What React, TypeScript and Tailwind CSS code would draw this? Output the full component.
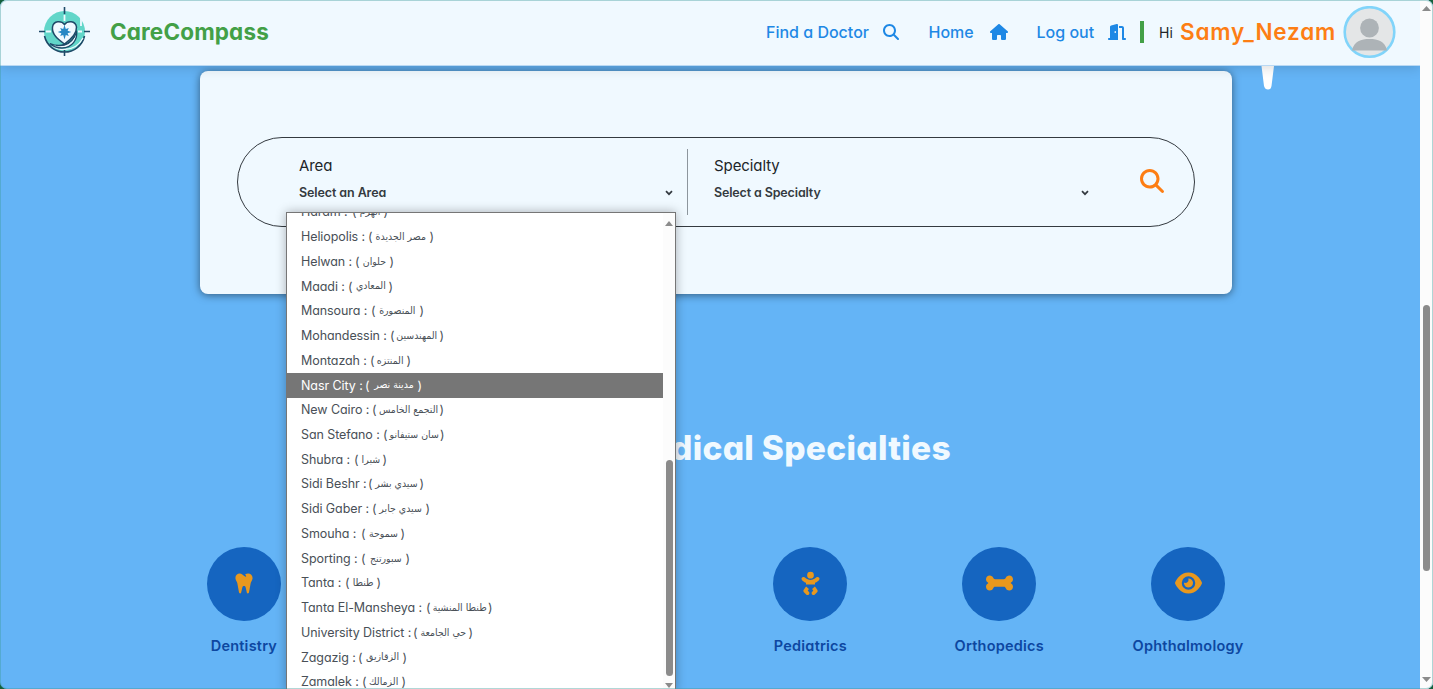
import React from "react";
import { FaTooth, FaBone, FaEye, FaBaby, FaMagnifyingGlass, FaHouse, FaDoorOpen } from "react-icons/fa6";

type Area = { name: string; arabic: string; nameWidth: number; end: number };

const areas: Area[] = [
  { name: "Haram", arabic: "الهرم", nameWidth: 51, end: 87 },
  { name: "Heliopolis", arabic: "مصر الجديدة", nameWidth: 67, end: 133 },
  { name: "Helwan", arabic: "حلوان", nameWidth: 54, end: 93 },
  { name: "Maadi", arabic: "المعادي", nameWidth: 47, end: 92 },
  { name: "Mansoura", arabic: "المنصورة", nameWidth: 70, end: 123 },
  { name: "Mohandessin", arabic: "المهندسين", nameWidth: 89, end: 143 },
  { name: "Montazah", arabic: "المنتزه", nameWidth: 69, end: 110 },
  { name: "Nasr City", arabic: "مدينة نصر", nameWidth: 64, end: 121 },
  { name: "New Cairo", arabic: "التجمع الخامس", nameWidth: 71, end: 143 },
  { name: "San Stefano", arabic: "سان ستيفانو", nameWidth: 82, end: 143 },
  { name: "Shubra", arabic: "شبرا", nameWidth: 53, end: 86 },
  { name: "Sidi Beshr", arabic: "سيدي بشر", nameWidth: 67, end: 123 },
  { name: "Sidi Gaber", arabic: "سيدي جابر", nameWidth: 71, end: 129 },
  { name: "Smouha", arabic: "سموحة", nameWidth: 60, end: 104 },
  { name: "Sporting", arabic: "سبورتنج", nameWidth: 60, end: 109 },
  { name: "Tanta", arabic: "طنطا", nameWidth: 44, end: 80 },
  { name: "Tanta El-Mansheya", arabic: "طنطا المنشية", nameWidth: 125, end: 191 },
  { name: "University District", arabic: "حي الجامعة", nameWidth: 112, end: 172 },
  { name: "Zagazig", arabic: "الزقازيق", nameWidth: 57, end: 106 },
  { name: "Zamalek", arabic: "الزمالك", nameWidth: 61, end: 105 },
];

function Logo() {
  return (
    <svg width="52" height="50" viewBox="0 0 52 50" fill="none" className="shrink-0">
      <circle cx="26.500" cy="24.500" r="20.5" fill="#62d6c9" />
      <path d="M6.500 29A20.5 20.5 0 0 0 46.500 29" stroke="#1e4a68" strokeWidth="1.600" />
      <path d="M45 31C41 38.500 34 42.500 26 42.500c-5 0-9-1.500-12-4" stroke="#f0f9ff" strokeWidth="1.300" />
      <path d="M26.500 8v6M8 24.500h5M40 24.500h4M43 11v8" stroke="#f0f9ff" strokeWidth="1.800" />
      <path d="M26.500 0v7M26.500 43v6M1 24.500h6M46 24.500h6" stroke="#1e4a68" strokeWidth="1.600" />
      <path
        d="M26.500 17.500c-3-4-11-4-12 2.500-1 7 5 12 12 17 7-5 12.500-10 12-17-1-6.500-9-6.500-12-2.500z"
        fill="#f0f9ff" stroke="#1e4a68" strokeWidth="1.500"
      />
      <path d="M12 36.500c7 3 14 2.500 20-2 4-3 6-7 6.500-11 1.500 9-4.500 17.500-14.500 17.500-5 0-9-1.500-12-4.500z" fill="#f0f9ff" stroke="#1e4a68" strokeWidth="1.300" />
      <path d="M18 38.500c8 1 15-2 18.500-9" stroke="#1e4a68" strokeWidth="1.100" />
      <path d="m26.500 18 1.300 4 3-1-1.200 2.700 3.700 1.300-3.700 1.300 1.200 2.700-3-1-1.300 4.500-1.300-4.500-3 1 1.200-2.700-3.700-1.300 3.700-1.300-1.200-2.700 3 1z" fill="#2788c5" />
    </svg>
  );
}

function Header() {
  return (
    <header className="relative z-10 flex h-[66px] w-full shrink-0 items-center border-b border-[#b9d9f4] bg-[#f0f9ff] pb-px pl-[38px] shadow-[0_2px_12px_rgba(0,0,0,0.14)]">
      <Logo />
      <div className="ml-5 w-[656px] text-[22.500px] font-bold tracking-[0.140px] text-[#43a047]">CareCompass</div>
      <nav className="flex items-center text-[16px] font-medium text-[#1e88e5]">
        <span className="w-[117px]">Find a Doctor</span>
        <FaMagnifyingGlass className="h-4 w-4 shrink-0" />
        <span className="ml-[29.500px] w-[61px]">Home</span>
        <FaHouse className="h-4 w-[18px] shrink-0" />
        <span className="ml-[29px] w-[71.500px]">Log out</span>
        <FaDoorOpen className="h-4 w-[18px] shrink-0" />
      </nav>
      <div className="ml-[14px] h-[22px] w-1 bg-[#43a047]" />
      <span className="ml-[15px] w-[21px] text-[14px] text-[#212529]">Hi</span>
      <span className="w-[163px] text-[22.500px] font-semibold tracking-[0.820px] text-[#fd7e14]">Samy_Nezam</span>
      <svg width="53" height="53" viewBox="0 0 53 53" className="shrink-0">
        <circle cx="26.500" cy="26" r="24.800" fill="#e4e6e7" stroke="#81d4fa" strokeWidth="2.600" />
        <circle cx="26.500" cy="22" r="9.400" fill="#adb3b7" />
        <path d="M9 44.500C11 35 18 33 26.500 33S42 35 44 44.500z" fill="#adb3b7" />
      </svg>
    </header>
  );
}

function Chevron() {
  return (
    <svg width="8" height="6" viewBox="0 0 8 6" fill="none" className="shrink-0">
      <path d="M1 1.200 4 4.200 7 1.200" stroke="#343a40" strokeWidth="1.700" />
    </svg>
  );
}

function AreaMenu() {
  return (
    <div className="absolute left-[286px] top-[212px] z-20 flex h-[480px] w-[390px] border border-[#767676] bg-white shadow-[0_0_10px_rgba(0,0,0,0.3)]">
      <div className="flex h-full flex-1 flex-col overflow-hidden">
        <div className="-mt-[12.900px] flex flex-col">
          {areas.map((a) => (
            <div
              key={a.name}
              className={
                a.name === "Nasr City"
                  ? "flex h-[24.740px] shrink-0 items-center whitespace-nowrap bg-[#767676] pl-[14px] pt-[0.600px] text-[12.500px] text-white"
                  : "flex h-[24.740px] shrink-0 items-center whitespace-nowrap pl-[14px] pt-[0.600px] text-[12.500px] text-[#495057]"
              }
            >
              <span className="shrink-0 tracking-[-0.080px]" style={{ width: a.nameWidth }}>{a.name} :</span>
              <span className="flex shrink-0 items-center justify-between" style={{ width: a.end - a.nameWidth }}>
                <span>(</span>
                <span lang="ar" className="scale-x-[0.94] pb-[2px] font-['DejaVu_Sans',sans-serif] text-[10px]">{a.arabic}</span>
                <span>)</span>
              </span>
            </div>
          ))}
        </div>
      </div>
      <div className="flex w-[12px] flex-col items-center bg-[#fcfcfc] pt-[8px]">
        <svg width="8" height="5" viewBox="0 0 8 5"><path d="M0 5 4 0 8 5z" fill="#8b8b8b" /></svg>
        <div className="mt-[234px] h-[216px] w-[7px] rounded-full bg-[#8b8b8b]" />
        <svg width="8" height="5" viewBox="0 0 8 5" className="mt-[7px]"><path d="M0 0 4 5 8 0z" fill="#8b8b8b" /></svg>
      </div>
    </div>
  );
}

function SearchCard() {
  return (
    <section className="ml-[200px] mt-[5px] h-[222.500px] w-[1032px] shrink-0 rounded-[8px] bg-[#f0f9ff] pl-[36.500px] pt-[66px] shadow-[0_1px_8px_rgba(0,0,0,0.5)]">
      <div className="flex h-[90px] w-[958.500px] rounded-full border border-[#343a40] pl-[61.500px]">
        <div className="w-[388px] pt-[18px]">
          <div className="text-[15px] leading-[20px] tracking-[-0.080px] text-[#212529]">Area</div>
          <div className="mt-[7px] flex items-center justify-between pr-[14px] text-[12.500px] font-semibold leading-[20px] tracking-[-0.100px] text-[#343a40]">
            Select an Area <Chevron />
          </div>
        </div>
        <div className="mt-[11px] h-[66px] w-px bg-[#8d969d]" />
        <div className="ml-[26px] w-[375px] pt-[18px]">
          <div className="text-[15px] leading-[20px] tracking-[-0.080px] text-[#212529]">Specialty</div>
          <div className="mt-[7px] flex items-center justify-between text-[12.500px] font-semibold leading-[20px] tracking-[-0.140px] text-[#343a40]">
            Select a Specialty <Chevron />
          </div>
        </div>
        <FaMagnifyingGlass className="ml-[50.500px] mt-[31px] h-6 w-6 text-[#fd7e14]" />
      </div>
    </section>
  );
}

const specialties = [
  { name: "Dentistry", icon: <FaTooth className="ml-px h-[23px] w-[20px]" /> },
  { name: "", icon: null },
  { name: "", icon: null },
  { name: "Pediatrics", icon: <FaBaby className="ml-px h-[24px] w-[21px]" /> },
  { name: "Orthopedics", icon: <FaBone className="ml-px h-[24px] w-[27px]" /> },
  { name: "Ophthalmology", icon: <FaEye className="ml-px h-[24px] w-[27px]" /> },
];

function Specialties() {
  return (
    <section>
      <h2 className="mt-[130.500px] h-[48px] w-[951px] text-right text-[33.500px] font-extrabold leading-[48px] tracking-[0.300px] text-[#f0f9ff]">
        Medical Specialties
      </h2>
      <div className="ml-[149.500px] mt-[75px] grid w-[1133px] grid-cols-6">
        {specialties.map((s, i) => (
          <div key={i} className="flex flex-col items-center">
            <div className="flex h-[74px] w-[74px] items-center justify-center rounded-full bg-[#1565c0] pb-0.5 text-[#e8981e]">
              {s.icon}
            </div>
            <div className="mt-[15px] text-[14.500px] font-semibold leading-[20px] tracking-[0.220px] text-[#0d47a1]">{s.name}</div>
          </div>
        ))}
      </div>
    </section>
  );
}

export default function App() {
  return (
    <div className="h-[689px] w-[1433px] overflow-hidden bg-[#14603c] font-['Inter','Liberation_Sans',sans-serif] [font-feature-settings:'cv11']">
      <div className="relative flex h-full w-full overflow-hidden rounded-[7px] bg-[#64b4f6]">
        <div className="relative flex w-[1420px] shrink-0 flex-col">
          <Header />
          <SearchCard />
          <Specialties />
          <svg width="14" height="24" viewBox="0 0 14 24" className="absolute left-[1261px] top-[66px]">
            <path d="M.500 0h12.500L10.500 20q-.5 3.500-3.500 3.500T3 20z" fill="#fff" />
          </svg>
        </div>
        <div className="relative z-10 flex w-[13px] flex-col items-center bg-[#fcfcfc] pt-[6px]">
          <svg width="9" height="5" viewBox="0 0 9 5"><path d="M0 5 4.500 0 9 5z" fill="#8b8b8b" /></svg>
          <div className="mt-[294px] h-[266px] w-[7px] rounded-full bg-[#8b8b8b]" />
          <svg width="9" height="5" viewBox="0 0 9 5" className="mt-[106px]"><path d="M0 0 4.500 5 9 0z" fill="#8b8b8b" /></svg>
        </div>
        <AreaMenu />
        <div className="pointer-events-none absolute inset-0 z-30 rounded-[7px] border border-[#3b9c9c]/40" />
      </div>
    </div>
  );
}
